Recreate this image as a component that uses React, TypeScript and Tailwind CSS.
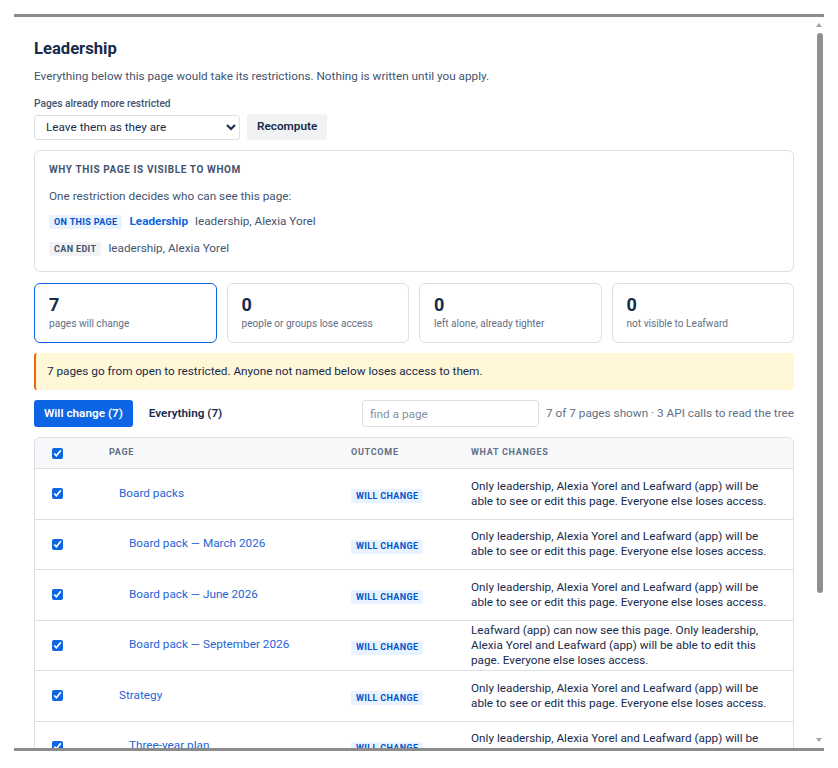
import React from "react";

type Row = { title: string; level: 1 | 2; text: string };

const rows: Row[] = [
  { title: "Board packs", level: 1, text: "Only leadership, Alexia Yorel and Leafward (app) will be able to see or edit this page. Everyone else loses access." },
  { title: "Board pack — March 2026", level: 2, text: "Only leadership, Alexia Yorel and Leafward (app) will be able to see or edit this page. Everyone else loses access." },
  { title: "Board pack — June 2026", level: 2, text: "Only leadership, Alexia Yorel and Leafward (app) will be able to see or edit this page. Everyone else loses access." },
  { title: "Board pack — September 2026", level: 2, text: "Leafward (app) can now see this page. Only leadership, Alexia Yorel and Leafward (app) will be able to edit this page. Everyone else loses access." },
  { title: "Strategy", level: 1, text: "Only leadership, Alexia Yorel and Leafward (app) will be able to see or edit this page. Everyone else loses access." },
  { title: "Three-year plan", level: 2, text: "Only leadership, Alexia Yorel and Leafward (app) will be able to see or edit this page. Everyone else loses access." },
  { title: "Offsite notes", level: 2, text: "Only leadership, Alexia Yorel and Leafward (app) will be able to see or edit this page. Everyone else loses access." },
];

const stats = [
  { n: "7", label: "pages will change", active: true },
  { n: "0", label: "people or groups lose access", active: false },
  { n: "0", label: "left alone, already tighter", active: false },
  { n: "0", label: "not visible to Leafward", active: false },
];

const Badge = ({ children, tone }: { children: React.ReactNode; tone: "blue" | "gray" }) => (
  <span
    className={`inline-flex h-[14px] items-center rounded-[2px] px-[5px] text-[9px] font-bold leading-none tracking-[0.04em] ${
      tone === "blue" ? "bg-[#E9F2FF] text-[#0055CC]" : "bg-[#F1F2F4] text-[#44546F]"
    }`}
  >
    {children}
  </span>
);

const Check = () => (
  <input type="checkbox" defaultChecked className="h-[11px] w-[11px] accent-[#0C66E4]" />
);

// fake scrollbar, the headless browser hides the real one
const Scrollbar = () => (
  <div className="pointer-events-none absolute bottom-0 right-0 top-0 flex w-[10px] flex-col items-center">
    <div className="mt-[6px] h-0 w-0 border-x-[3px] border-b-[4px] border-x-transparent border-b-[#a3a3a3]" />
    <div className="ml-[2px] mt-[6px] h-[560px] w-[6px] rounded-full bg-[#8f8f8f]" />
    <div className="mb-[6px] mt-auto h-0 w-0 border-x-[3px] border-t-[4px] border-x-transparent border-t-[#a3a3a3]" />
  </div>
);

export default function App() {
  return (
    <div className="min-h-screen bg-white pl-[14px] pt-[14px] font-['Roboto',_sans-serif] text-[#172B4D]">
      <div className="relative h-[737px] w-[810px] border-y-[3px] border-[#8c8c8c]">
        <div className="h-full overflow-y-auto [scrollbar-width:none]">
          <div className="pb-6 pl-5 pr-[30px] pt-[21px]">
            <h1 className="text-[16.6px] font-bold leading-[22px]">Leadership</h1>
            <p className="mt-[7px] text-[11.75px] leading-[18px] text-[#44546F]">
              Everything below this page would take its restrictions. Nothing is written until you apply.
            </p>

            <div className="mt-[12px] text-[10.2px] font-medium leading-[14px] text-[#44546F]">Pages already more restricted</div>
            <div className="mt-[3px] flex items-center gap-[7px]">
              <select className="h-[25px] w-[206px] rounded-[3px] border border-[#DCDFE4] bg-white pl-[7px] text-[11.75px] text-[#172B4D]">
                <option>Leave them as they are</option>
                <option>Tighten them too</option>
              </select>
              <button className="h-[26px] rounded-[3px] bg-[#F1F2F4] px-[10px] text-[11.75px] font-semibold text-[#172B4D]">Recompute</button>
            </div>

            <div className="mt-[10px] rounded-md border border-[#DCDFE4] px-[14px] pb-[12px] pt-[12px]">
              <div className="text-[10px] font-bold leading-[14px] tracking-[0.06em] text-[#44546F]">WHY THIS PAGE IS VISIBLE TO WHOM</div>
              <p className="mt-[10px] text-[11.75px] leading-[18px] text-[#44546F]">One restriction decides who can see this page:</p>
              <div className="mt-[7px] flex h-[20px] items-center gap-[7px] text-[11.75px]">
                <Badge tone="blue">ON THIS PAGE</Badge>
                <span className="font-bold text-[#0C66E4]">Leadership</span>
                <span className="text-[#44546F]">leadership, Alexia Yorel</span>
              </div>
              <div className="mt-[7px] flex h-[20px] items-center gap-[7px] text-[11.75px]">
                <Badge tone="gray">CAN EDIT</Badge>
                <span className="text-[#44546F]">leadership, Alexia Yorel</span>
              </div>
            </div>

            <div className="mt-[11px] grid grid-cols-4 gap-[10px]">
              {stats.map((s, i) => (
                <div
                  key={i}
                  className={`h-[60px] rounded-md px-[14px] pt-[9px] ${
                    s.active ? "border-[1.5px] border-[#0C66E4]" : "border border-[#DCDFE4]"
                  }`}
                >
                  <div className="text-[18px] font-bold leading-[24px]">{s.n}</div>
                  <div className="text-[10.1px] leading-[14px] text-[#626F86]">{s.label}</div>
                </div>
              ))}
            </div>

            <div className="mt-[10px] flex h-[37px] items-center rounded-[3px] border-l-2 border-[#E56910] bg-[#FFF7D6] pl-[11px] text-[11.75px]">
              7 pages go from open to restricted. Anyone not named below loses access to them.
            </div>

            <div className="mt-[10px] flex h-[27px] items-center">
              <button className="h-[27px] rounded-[3px] bg-[#0C66E4] px-[10px] text-[11.75px] font-semibold text-white">Will change (7)</button>
              <button className="ml-[6px] h-[27px] rounded-[3px] px-[10px] text-[11.75px] font-semibold text-[#172B4D]">Everything (7)</button>
              <input
                placeholder="find a page"
                className="ml-auto h-[27px] w-[177px] rounded-[3px] border border-[#DCDFE4] px-[7px] text-[11.75px] placeholder:text-[#8590A2]"
              />
              <span className="ml-[7px] text-[11.75px] text-[#626F86]">7 of 7 pages shown · 3 API calls to read the tree</span>
            </div>

            <div className="mt-[10px] overflow-hidden rounded-md border border-[#DCDFE4]">
              <div className="grid h-[31px] grid-cols-[59px_242px_120px_1fr] items-center border-b border-[#DCDFE4] bg-[#F7F8F9] text-[9px] font-bold tracking-[0.08em] text-[#626F86]">
                <div className="flex pl-[17px]">
                  <Check />
                </div>
                <div className="pl-[15px]">PAGE</div>
                <div className="pl-[15px]">OUTCOME</div>
                <div className="pl-[15px]">WHAT CHANGES</div>
              </div>
              {rows.map((r, i) => (
                <div
                  key={i}
                  className="grid h-[50.5px] grid-cols-[59px_242px_120px_1fr] items-center border-b border-[#DCDFE4] last:border-b-0"
                >
                  <div className="flex pl-[17px]">
                    <Check />
                  </div>
                  <div className="pl-[15px] text-[11.75px] text-[#1F63D6]">
                    <span className={r.level === 1 ? "pl-[10px]" : "pl-[20px]"}>{r.title}</span>
                  </div>
                  <div className="pl-[15px]">
                    <Badge tone="blue">WILL CHANGE</Badge>
                  </div>
                  <div className="pl-[15px] pr-[15px] text-[11.75px] leading-[15px]">{r.text}</div>
                </div>
              ))}
            </div>

            <div className="mt-[16px] flex justify-end gap-[8px]">
              <button className="h-[28px] rounded-[3px] px-[12px] text-[11.75px] font-semibold text-[#44546F]">Cancel</button>
              <button className="h-[28px] rounded-[3px] bg-[#0C66E4] px-[12px] text-[11.75px] font-semibold text-white">Apply to 7 pages</button>
            </div>
          </div>
        </div>
        <Scrollbar />
      </div>
    </div>
  );
}
